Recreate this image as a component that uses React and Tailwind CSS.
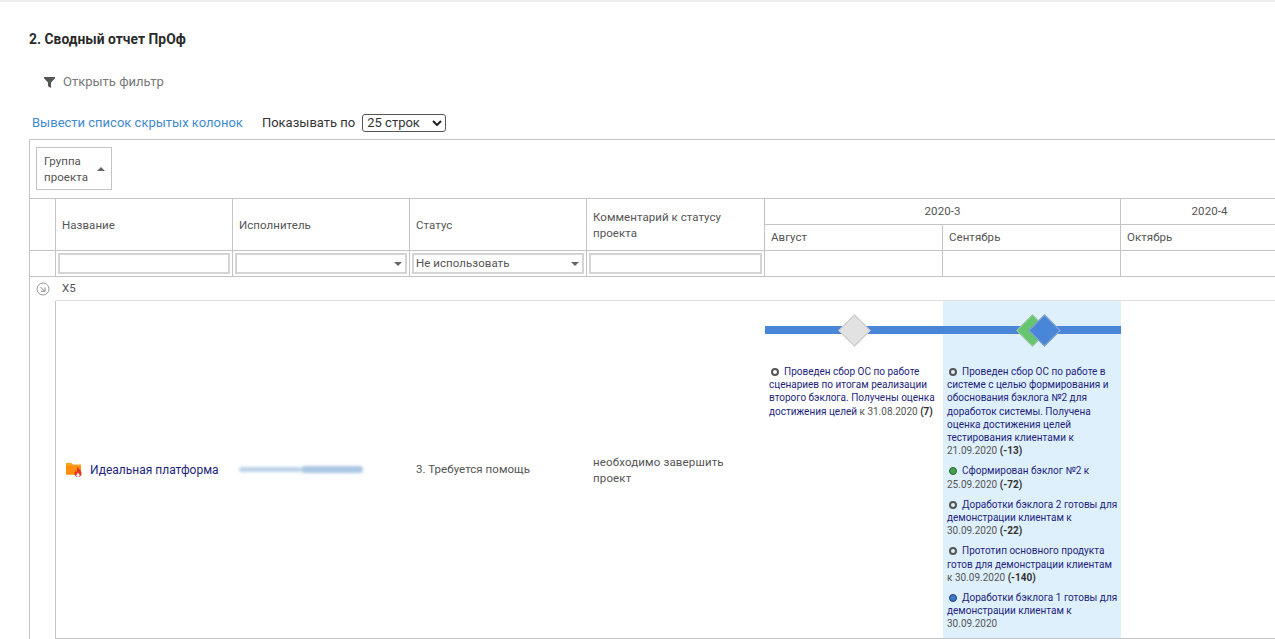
const roboto = "font-['Roboto',sans-serif]";

function Caret({ className = "" }) {
  return (
    <svg width="8" height="4" viewBox="0 0 8 4" className={className}>
      <path d="M0 0 H8 L4 4 Z" fill="#666" />
    </svg>
  );
}

function FilterBox({ children, caret }) {
  return (
    <div className="mx-[2px] flex h-[21px] items-center justify-between border-2 border-[#d4d4d4] bg-white pl-[2px] pr-[3px]">
      <span>{children}</span>
      {caret && <Caret />}
    </div>
  );
}

function Milestone({ dot, children, date }) {
  const dots = {
    empty: "border-2 border-[#555] bg-transparent",
    green: "border border-[#2f5f38] bg-[#3fa34d]",
    blue: "border border-[#1f3f78] bg-[#3f78c9]",
  };
  return (
    <div className="mb-[7px]">
      <span className={`mr-[5px] ml-[2px] inline-block h-[8px] w-[8px] rounded-full align-[-1px] ${dots[dot]}`} />
      <span className="text-[#231f7c]">{children}</span>
      {date}
    </div>
  );
}

const B = ({ children }) => <b className="font-bold text-[#333]"> {children}</b>;

function Bar() {
  return <div className="absolute inset-x-0 top-[25px] h-[8px] bg-[#4a86d8]" />;
}

function Diamond({ className }) {
  return <div className={`absolute top-[18px] h-[23px] w-[23px] rotate-45 border ${className}`} />;
}

export default function App() {
  const th = "border-r border-b border-[#c4c4c4] px-[6px] align-middle font-normal";
  const td = "border-r border-b border-[#c4c4c4]";
  return (
    <div className={`h-[639px] w-[1275px] overflow-hidden bg-white text-[11.5px] tracking-[0.05px] text-[#555] ${roboto}`}>
      <div className="h-[2px] bg-[#eeeeee]" />
      <h2 className="ml-[29px] mt-[29px] text-[13.8px] leading-[16px] font-bold tracking-[0.05px] text-[#2b2b2b]">2. Сводный отчет ПрОф</h2>
      <div className="ml-[44px] mt-[27px] flex h-[16px] items-center gap-[8px] text-[13px] tracking-normal text-[#777]">
        <svg width="11" height="11" viewBox="0 0 11 11">
          <path d="M0 0 H11 V1.2 L7 5.5 V11 L4 9.2 V5.5 L0 1.2 Z" fill="#555" />
        </svg>
        <span>Открыть фильтр</span>
      </div>
      <div className="ml-[32px] mt-[23px] flex h-[19px] items-center text-[13px] tracking-normal">
        <span className="text-[#3f8bd0]">Вывести список скрытых колонок</span>
        <span className="ml-[19px] text-[#333]">Показывать по</span>
        <div className="ml-[7px] flex h-[18px] w-[84px] items-center justify-between rounded-[3px] border border-[#555] pl-[4px] pr-[3px] text-[#333]">
          <span>25 строк</span>
          <svg width="10" height="6" viewBox="0 0 10 6">
            <path d="M1 1 L5 5 L9 1" fill="none" stroke="#222" strokeWidth="2" />
          </svg>
        </div>
      </div>

      <div className="ml-[29px] mt-[7px] w-[1270px] border-t border-l border-[#c4c4c4]">
        <div className="h-[59px] border-b border-[#c4c4c4] pt-[7px] pl-[6px]">
          <div className="flex h-[43px] w-[76px] items-center gap-[9px] border border-[#c4c4c4] pl-[7px] leading-[16px]">
            <span>Группа<br />проекта</span>
            <svg width="8" height="4" viewBox="0 0 8 4"><path d="M0 4 H8 L4 0 Z" fill="#666" /></svg>
          </div>
        </div>
        <table className="w-full table-fixed border-separate border-spacing-0">
          <colgroup>
            <col className="w-[26px]" />
            <col className="w-[177px]" />
            <col className="w-[177px]" />
            <col className="w-[177px]" />
            <col className="w-[178px]" />
            <col className="w-[178px]" />
            <col className="w-[178px]" />
            <col />
          </colgroup>
          <thead>
            <tr className="h-[26px]">
              <th rowSpan={2} className={th} />
              <th rowSpan={2} className={`${th} pt-[2px] text-left`}>Название</th>
              <th rowSpan={2} className={`${th} pt-[2px] text-left`}>Исполнитель</th>
              <th rowSpan={2} className={`${th} pt-[2px] text-left`}>Статус</th>
              <th rowSpan={2} className={`${th} text-left leading-[16px]`}>Комментарий к статусу проекта</th>
              <th colSpan={2} className={`${th} text-center`}>2020-3</th>
              <th className={`${th} text-center`}>2020-4</th>
            </tr>
            <tr className="h-[26px]">
              <th className={`${th} text-left`}>Август</th>
              <th className={`${th} text-left`}>Сентябрь</th>
              <th className={`${th} text-left`}>Октябрь</th>
            </tr>
            <tr className="h-[26px]">
              <td className={td} />
              <td className={td}><FilterBox /></td>
              <td className={td}><FilterBox caret /></td>
              <td className={td}><FilterBox caret>Не использовать</FilterBox></td>
              <td className={td}><FilterBox /></td>
              <td className={td} />
              <td className={td} />
              <td className={td} />
            </tr>
          </thead>
          <tbody>
            <tr className="h-[24px]">
              <td className="text-center align-middle">
                <svg width="14" height="14" viewBox="0 0 14 14" className="mx-auto">
                  <circle cx="7" cy="7" r="6" fill="none" stroke="#999" />
                  <path d="M4.5 5 L8.5 9 M9 5.5 V9.3 H5.2" fill="none" stroke="#888" />
                </svg>
              </td>
              <td colSpan={7} className="border-b border-[#dddddd] px-[6px] align-middle">X5</td>
            </tr>
            <tr className="h-[338px]">
              <td className="border-r border-[#c4c4c4]" />
              <td className="border-b border-[#c4c4c4] pl-[10px] align-middle">
                <div className="flex items-center gap-[8px] text-[12px] tracking-normal text-[#231f7c]">
                  <svg width="16" height="15" viewBox="0 0 16 15">
                    <path d="M0 1 H5.5 L7 2.6 H15 V12.5 H0 Z" fill="#f5a11f" />
                    <path d="M0 4 H15 V12.5 H0 Z" fill="#ff8f0c" />
                    <path d="M11.8 4.6 C12 7 15.6 8.4 15.6 11.6 C15.6 13.6 14 15 12 15 C10 15 8.4 13.6 8.4 11.6 C8.4 10.2 9.2 9.2 9.9 8.4 C10 9.4 10.4 10 10.9 10.2 C11 8.2 10.8 6.2 11.8 4.6 Z" fill="#e8321f" />
                    <path d="M12 10.4 C12.4 11.4 13.6 12 13.6 13.2 C13.6 14.2 12.8 14.8 12 14.8 C11.2 14.8 10.4 14.2 10.4 13.2 C10.4 12.2 11.6 11.6 12 10.4 Z" fill="#ffffff" />
                  </svg>
                  <span>Идеальная платформа</span>
                </div>
              </td>
              <td className="border-b border-[#c4c4c4] pl-[6px] align-middle">
                <div className="flex items-center blur-[1.5px]">
                  <div className="h-[5px] w-[62px] rounded-full bg-[#bcd3e9]" />
                  <div className="h-[7px] w-[62px] rounded-full bg-[#a9c6e2]" />
                </div>
              </td>
              <td className="border-b border-[#c4c4c4] px-[6px] align-middle">3. Требуется помощь</td>
              <td className="border-b border-[#c4c4c4] px-[6px] align-middle leading-[16px] tracking-[0.15px]">необходимо завершить проект</td>
              <td className="relative border-b border-[#c4c4c4] pl-[4px] pr-[2px] pt-[64px] align-top text-[10px] leading-[13.2px] tracking-normal">
                <Bar />
                <Diamond className="left-[77.5px] border-[#c9c9c9] bg-[#e2e2e2]" />
                <Milestone dot="empty" date={<span className="text-[#555]"> к 31.08.2020<B>(7)</B></span>}>
                  Проведен сбор ОС по работе сценариев по итогам реализации второго бэклога. Получены оценка достижения целей
                </Milestone>
              </td>
              <td className="relative border-b border-[#c4c4c4] bg-[#dff0fd] pl-[4px] pr-[2px] pt-[64px] align-top text-[10px] leading-[13.2px] tracking-normal">
                <Bar />
                <Diamond className="left-[77.5px] border-[#9fc9a4] bg-[#66c56f]" />
                <Diamond className="left-[89.5px] border-[#8fa9d0] bg-[#4a86d8]" />
                <Milestone dot="empty" date={<span className="text-[#555]"> 21.09.2020<B>(-13)</B></span>}>
                  Проведен сбор ОС по работе в системе с целью формирования и обоснования бэклога №2 для доработок системы. Получена оценка достижения целей тестирования клиентами к
                </Milestone>
                <Milestone dot="green" date={<span className="text-[#555]"> 25.09.2020<B>(-72)</B></span>}>
                  Сформирован бэклог №2 к
                </Milestone>
                <Milestone dot="empty" date={<span className="text-[#555]"> 30.09.2020<B>(-22)</B></span>}>
                  Доработки бэклога 2 готовы для демонстрации клиентам к
                </Milestone>
                <Milestone dot="empty" date={<span className="text-[#555]"> к 30.09.2020<B>(-140)</B></span>}>
                  Прототип основного продукта готов для демонстрации клиентам
                </Milestone>
                <Milestone dot="blue" date={<span className="text-[#555]"> 30.09.2020</span>}>
                  Доработки бэклога 1 готовы для демонстрации клиентам к
                </Milestone>
              </td>
              <td className="border-b border-[#c4c4c4]" />
            </tr>
          </tbody>
        </table>
      </div>
    </div>
  );
}
